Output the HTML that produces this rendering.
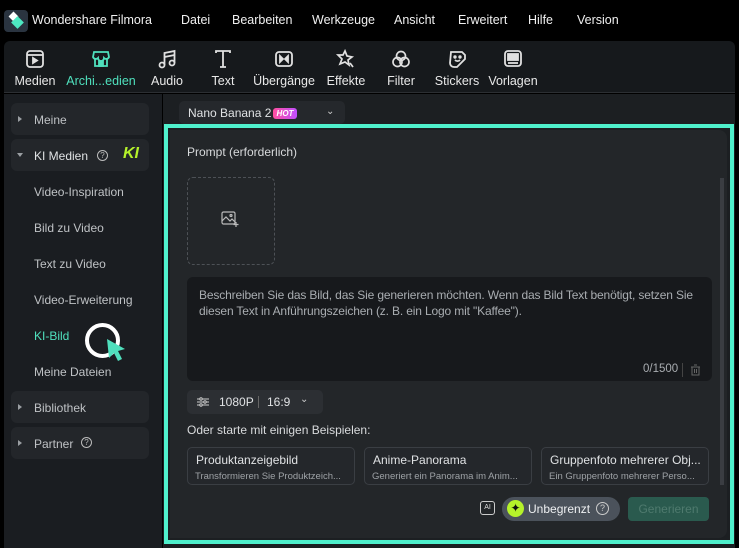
<!DOCTYPE html>
<html><head><meta charset="utf-8"><style>
*{box-sizing:border-box;margin:0;padding:0}
body{width:739px;height:548px;background:#000;font-family:"Liberation Sans",sans-serif;color:#d6d8da;position:relative;overflow:hidden;font-size:12px}
.abs{position:absolute}
.menu span{position:absolute;top:13px;font-size:12.5px;color:#f0f0f0}
.tool{position:absolute;top:48px;width:60px;text-align:center;font-size:12.5px;color:#e8e8e8}
.tool svg{display:block;margin:0 auto 4px;width:22px;height:22px}
.card{position:absolute;left:11px;width:138px;height:32px;background:#23262a;border-radius:6px}
.si{position:absolute;left:34px;font-size:12px;color:#bfc2c5}
.tri{position:absolute;left:18px;width:0;height:0;border-top:3px solid transparent;border-bottom:3px solid transparent;border-left:4px solid #9a9ea2}
.ex{position:absolute;top:447px;width:168px;height:38px;border:1px solid #3a3e43;border-radius:5px;background:#24272b}
.ex b{display:block;font-weight:normal;font-size:12px;color:#e0e2e4;margin:5px 0 0 8px}
.ex i{display:block;font-style:normal;font-size:9.5px;color:#9ea2a6;margin:4px 0 0 7px;white-space:nowrap}
</style></head><body>
<div class="abs" style="left:4px;top:10px;width:24px;height:22px;background:#2a3440;border-radius:4px"></div>
<div class="abs" style="left:10px;top:13px;width:7px;height:7px;background:#fff;transform:rotate(45deg)"></div>
<div class="abs" style="left:13px;top:18px;width:9px;height:9px;background:#4de8c2;transform:rotate(45deg)"></div>
<div class="abs" style="left:32px;top:13px;font-size:12.5px;color:#f0f0f0">Wondershare Filmora</div>
<div class="menu"><span style="left:181px">Datei</span><span style="left:232px">Bearbeiten</span><span style="left:312px">Werkzeuge</span><span style="left:394px">Ansicht</span><span style="left:458px">Erweitert</span><span style="left:528px">Hilfe</span><span style="left:577px">Version</span></div>
<div class="abs" style="left:4px;top:41px;width:731px;height:52px;background:#16191c;border-radius:6px 6px 0 0;border-bottom:1px solid #2c2f33"></div>
<div class="tool" style="left:5px"><svg viewBox="0 0 22 22" fill="none" stroke="#e0e0e0" stroke-width="1.8"><rect x="3" y="3" width="16" height="16" rx="3"/><line x1="3" y1="7" x2="19" y2="7"/><path d="M9 10l4 2.5-4 2.5z" fill="#e0e0e0"/></svg>Medien</div>
<div class="tool" style="left:66px;width:70px;color:#4fe0bd"><svg viewBox="0 0 22 22" fill="none" stroke="#4fe0bd" stroke-width="1.8"><path d="M4 4h14l1 5a3 3 0 0 1-5 1 3 3 0 0 1-6 0 3 3 0 0 1-5-1z"/><path d="M5 11v7h12v-7"/><rect x="9" y="13" width="4" height="5" fill="#4fe0bd"/></svg>Archi...edien</div>
<div class="tool" style="left:137px"><svg viewBox="0 0 22 22" fill="none" stroke="#e0e0e0" stroke-width="1.8"><circle cx="6" cy="17" r="2.5"/><circle cx="16" cy="15" r="2.5"/><path d="M8.5 17V5l10-2v12"/><path d="M8.5 9l10-2"/></svg>Audio</div>
<div class="tool" style="left:193px"><svg viewBox="0 0 22 22" fill="none" stroke="#e0e0e0" stroke-width="1.8"><path d="M4 5V3h14v2M11 3v16M8 19h6"/></svg>Text</div>
<div class="tool" style="left:250px;width:68px"><svg viewBox="0 0 22 22" fill="none" stroke="#e0e0e0" stroke-width="1.8"><rect x="3" y="4" width="16" height="14" rx="3"/><path d="M7 8l3 3-3 3z M15 8l-3 3 3 3z" fill="#e0e0e0"/></svg>Übergänge</div>
<div class="tool" style="left:316px"><svg viewBox="0 0 22 22" fill="none" stroke="#e0e0e0" stroke-width="1.7"><path d="M10 3l2 5 5 1-4 3 1 5-4-3-5 2 2-5-4-4 5 0z"/><path d="M15 15l3 4"/></svg>Effekte</div>
<div class="tool" style="left:371px"><svg viewBox="0 0 22 22" fill="none" stroke="#e0e0e0" stroke-width="1.7"><circle cx="11" cy="8" r="4.5"/><circle cx="7.5" cy="14" r="4.5"/><circle cx="14.5" cy="14" r="4.5"/></svg>Filter</div>
<div class="tool" style="left:427px"><svg viewBox="0 0 22 22" fill="none" stroke="#e0e0e0" stroke-width="1.8"><path d="M5 4h11l3 3v4l-8 8H8a4 4 0 0 1-4-4z"/><path d="M9 12c1.5 1.5 3.5 1.5 5 0"/><circle cx="9" cy="9" r=".8" fill="#e0e0e0"/><circle cx="14" cy="9" r=".8" fill="#e0e0e0"/></svg>Stickers</div>
<div class="tool" style="left:483px"><svg viewBox="0 0 22 22" fill="none" stroke="#e0e0e0" stroke-width="1.8"><rect x="3" y="3" width="16" height="15" rx="3"/><rect x="6" y="6" width="10" height="6" fill="#e0e0e0"/><line x1="6" y1="15" x2="16" y2="15"/></svg>Vorlagen</div>
<div class="abs" style="left:4px;top:94px;width:158px;height:454px;background:#1a1d21"></div>
<div class="abs" style="left:163px;top:94px;width:572px;height:454px;background:#1c1f22"></div>
<div class="card" style="top:103px"></div><div class="tri" style="top:116px"></div><div class="si" style="top:113px">Meine</div>
<div class="card" style="top:139px"></div><div class="abs" style="left:17px;top:153px;border-left:3px solid transparent;border-right:3px solid transparent;border-top:4px solid #9a9ea2"></div><div class="si" style="top:149px;color:#e0e2e4">KI Medien</div>
<div class="abs" style="left:97px;top:150px;width:11px;height:11px;border:1px solid #bbb;border-radius:50%;font-size:8px;line-height:9px;text-align:center;color:#bbb">?</div>
<div class="abs" style="left:123px;top:145px;font-size:16px;font-weight:bold;font-style:italic;color:#b5f22a">KI</div>
<div class="si" style="top:185px">Video-Inspiration</div>
<div class="si" style="top:221px">Bild zu Video</div>
<div class="si" style="top:257px">Text zu Video</div>
<div class="si" style="top:293px">Video-Erweiterung</div>
<div class="si" style="top:329px;color:#4fe0bd">KI-Bild</div>
<div class="si" style="top:365px">Meine Dateien</div>
<div class="abs" style="left:85px;top:323px;width:35px;height:35px;border:4px solid #fff;border-radius:50%"></div>
<svg class="abs" style="left:104px;top:337px" width="24" height="28" viewBox="0 0 24 28"><path d="M3 2l18 10-7 2 4 8-4 2-4-8-5 5z" fill="#4fe0bd"/></svg>
<div class="card" style="top:391px"></div><div class="tri" style="top:404px"></div><div class="si" style="top:401px">Bibliothek</div>
<div class="card" style="top:427px"></div><div class="tri" style="top:440px"></div><div class="si" style="top:437px">Partner</div>
<div class="abs" style="left:81px;top:437px;width:11px;height:11px;border:1px solid #bbb;border-radius:50%;font-size:8px;line-height:9px;text-align:center;color:#bbb">?</div>
<div class="abs" style="left:179px;top:101px;width:166px;height:23px;background:#25282c;border-radius:5px"></div>
<div class="abs" style="left:188px;top:106px;font-size:12px;color:#e0e2e4">Nano Banana 2</div>
<div class="abs" style="left:273px;top:108px;width:24px;height:11px;border-radius:3px;background:linear-gradient(90deg,#ff4fa0,#c04fff);font-size:8px;font-weight:bold;font-style:italic;color:#fff;text-align:center;line-height:11px">HOT</div>
<div class="abs" style="left:326px;top:106px;font-size:10px;color:#ccc">&#x2304;</div>
<div class="abs" style="left:164px;top:124px;width:570px;height:420px;border:4px solid #4ff0cc;background:#1c1f22"></div>
<div class="abs" style="left:170px;top:130px;width:557px;height:408px;background:#232629;border-radius:0 8px 8px 0"></div>
<div class="abs" style="left:720px;top:178px;width:4px;height:307px;background:#3a3d42"></div>
<div class="abs" style="left:187px;top:145px;font-size:12px;color:#d8dadc">Prompt (erforderlich)</div>
<div class="abs" style="left:187px;top:177px;width:88px;height:88px;border:1px dashed #4d5156;border-radius:6px"></div>
<svg class="abs" style="left:221px;top:211px" width="19" height="16" viewBox="0 0 19 16" fill="none" stroke="#bbb" stroke-width="1.2"><rect x="1" y="1" width="13" height="12" rx="1.5"/><path d="M1 10l4-4 4 4 2-2 3 3"/><circle cx="10" cy="4.5" r="1"/><path d="M15 11v5M12.5 13.5h5"/></svg>
<div class="abs" style="left:187px;top:277px;width:525px;height:104px;background:#17191c;border-radius:6px"></div>
<div class="abs" style="left:199px;top:287px;width:510px;font-size:12px;line-height:16px;color:#a9adb1;letter-spacing:-0.15px">Beschreiben Sie das Bild, das Sie generieren möchten. Wenn das Bild Text benötigt, setzen Sie<br>diesen Text in Anführungszeichen (z. B. ein Logo mit "Kaffee").</div>
<div class="abs" style="left:643px;top:363px;font-size:11.5px;color:#a9adb1">0/1500</div>
<div class="abs" style="left:682px;top:363px;width:1px;height:14px;background:#444"></div>
<svg class="abs" style="left:690px;top:364px" width="11" height="12" viewBox="0 0 11 12" fill="none" stroke="#666" stroke-width="1"><path d="M1 3h9M4 1h3M2 3v8h7V3M4.5 5v4M6.5 5v4"/></svg>
<div class="abs" style="left:187px;top:390px;width:136px;height:24px;background:#2c2f33;border-radius:5px"></div>
<svg class="abs" style="left:197px;top:397px" width="12" height="10" viewBox="0 0 12 10" fill="none" stroke="#ccc" stroke-width="1"><path d="M0 2h12M0 5h12M0 8h12"/><circle cx="4" cy="2" r="1.2" fill="#2c2f33"/><circle cx="8" cy="5" r="1.2" fill="#2c2f33"/><circle cx="4" cy="8" r="1.2" fill="#2c2f33"/></svg>
<div class="abs" style="left:219px;top:395px;font-size:12px;color:#e0e2e4">1080P</div>
<div class="abs" style="left:258px;top:396px;width:1px;height:12px;background:#666"></div>
<div class="abs" style="left:267px;top:395px;font-size:12px;color:#e0e2e4">16:9</div>
<div class="abs" style="left:300px;top:394px;font-size:10px;color:#ccc">&#x2304;</div>
<div class="abs" style="left:187px;top:423px;font-size:12px;color:#d8dadc">Oder starte mit einigen Beispielen:</div>
<div class="ex" style="left:187px"><b>Produktanzeigebild</b><i>Transformieren Sie Produktzeich...</i></div>
<div class="ex" style="left:364px"><b>Anime-Panorama</b><i>Generiert ein Panorama im Anim...</i></div>
<div class="ex" style="left:541px"><b>Gruppenfoto mehrerer Obj...</b><i>Ein Gruppenfoto mehrerer Perso...</i></div>
<div class="abs" style="left:480px;top:501px;width:15px;height:14px;border:1px solid #ccc;border-radius:3px;font-size:7px;line-height:12px;text-align:center;color:#ddd">AI</div>
<div class="abs" style="left:502px;top:497px;width:118px;height:24px;background:#4b525b;border-radius:12px"></div>
<div class="abs" style="left:507px;top:500px;width:17px;height:17px;background:#b5f22a;border-radius:50%;text-align:center;font-size:12px;line-height:17px;color:#111">✦</div>
<div class="abs" style="left:528px;top:502px;font-size:12px;color:#eef0f2">Unbegrenzt</div>
<div class="abs" style="left:596px;top:502px;width:13px;height:13px;border:1px solid #ccc;border-radius:50%;font-size:9px;line-height:11px;text-align:center;color:#ccc">?</div>
<div class="abs" style="left:628px;top:497px;width:81px;height:24px;background:#2a5a4e;border-radius:4px;font-size:12px;line-height:24px;text-align:center;color:#4f7a6e">Generieren</div>
</body></html>
